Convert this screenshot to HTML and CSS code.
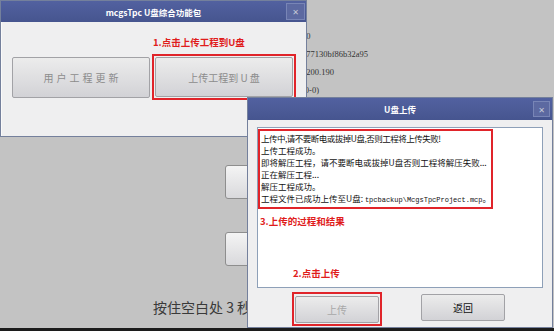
FILE: index.html
```html
<!DOCTYPE html>
<html>
<head>
<meta charset="utf-8">
<link rel="stylesheet" href="styles.css">
</head>
<body>
<div class="screen">
  <div class="desktop">
    <div class="app">
      <div class="info">
        <div class="info-line">10</div>
        <div class="info-line">577130bf86b32a95</div>
        <div class="info-line">1200.190</div>
        <div class="info-line">(0-0)</div>
      </div>
      <div class="app-btn"></div>
      <div class="app-btn app-btn-2"></div>
      <div class="hint">按住空白处 3 秒</div>
    </div>

    <div class="win win-main">
      <div class="titlebar">
        <span></span>
        <span class="title">mcgsTpc U盘综合功能包</span>
        <span class="close">✕</span>
      </div>
      <div class="body body-main">
        <div class="note note-1">1.点击上传工程到U盘</div>
        <div class="btn-row">
          <button class="btn btn-big btn-spaced">用户工程更新</button>
          <div class="redbox redbox-main">
            <button class="btn btn-big btn-inner">上传工程到 U 盘</button>
          </div>
        </div>
      </div>
    </div>

    <div class="win win-upload">
      <div class="titlebar titlebar-2">
        <span></span>
        <span class="title">U盘上传</span>
        <span class="close close-2">✕</span>
      </div>
      <div class="body body-upload">
        <div class="textarea">
          <div class="redbox log">
            <div class="log-line log-tight">上传中,请不要断电或拔掉U盘,否则工程将上传失败!</div>
            <div class="log-line">上传工程成功。</div>
            <div class="log-line">即将解压工程，请不要断电或拔掉U盘否则工程将解压失败...</div>
            <div class="log-line">正在解压工程...</div>
            <div class="log-line">解压工程成功。</div>
            <div class="log-line">工程文件已成功上传至U盘: <span class="mono">tpcbackup\McgsTpcProject.mcp</span>。</div>
          </div>
          <div class="note note-3">3.上传的过程和结果</div>
          <div class="note note-2">2.点击上传</div>
        </div>
        <div class="btn-row btn-row-2">
          <div class="redbox redbox-up">
            <button class="btn btn-small btn-disabled">上传</button>
          </div>
          <button class="btn btn-small btn-back">返回</button>
        </div>
      </div>
    </div>
  </div>
  <div class="bezel"></div>
</div>
</body>
</html>
```

FILE: styles.css
```css
html, body {
  margin: 0;
  padding: 0;
}
body {
  width: 554px;
  height: 331px;
  overflow: hidden;
  background: #c3c3c3;
  font-family: "Noto Sans CJK SC", "DejaVu Sans", sans-serif;
}
.screen {
  width: 554px;
  height: 331px;
  display: flex;
  flex-direction: column;
}
.desktop {
  position: relative;
  flex: 1;
  overflow: hidden;
  background: #c3c3c3;
}
.bezel {
  height: 3px;
  background: #1c1c1c;
}

/* background application */
.app {
  display: flex;
  flex-direction: column;
  align-items: flex-start;
}
.info {
  margin: 27px 0 0 302px;
  font-family: "Liberation Serif", serif;
  font-size: 8.5px;
  color: #333;
}
.info-line {
  height: 18px;
  line-height: 18px;
}
.app-btn {
  margin: 66px 0 0 225px;
  width: 80px;
  height: 34px;
  box-sizing: border-box;
  border: 1px solid #8e8e8e;
  border-radius: 3px;
  background: linear-gradient(#f4f4f4, #d9d9dc);
}
.app-btn-2 {
  margin-top: 33px;
}
.hint {
  margin: 31px 0 0 153px;
  font-family: "Noto Sans CJK SC", serif;
  font-size: 14px;
  line-height: 20px;
  color: #3a3a3a;
  white-space: nowrap;
}

/* windows */
.win {
  position: absolute;
  box-sizing: border-box;
  border: 1px solid #74809c;
  background: #efeff0;
  display: flex;
  flex-direction: column;
}
.win-main {
  left: 0;
  top: 0;
  width: 307px;
  height: 137px;
}
.win-upload {
  left: 247px;
  top: 97px;
  width: 306px;
  height: 231px;
}
.titlebar {
  height: 21px;
  background: linear-gradient(#5261a0, #46558f);
  display: grid;
  grid-template-columns: 1fr auto 1fr;
  align-items: center;
  color: #fff;
  font-weight: bold;
  font-size: 8.5px;
}
.titlebar-2 {
  height: 22px;
}
.title {
  white-space: nowrap;
}
.close {
  justify-self: end;
  margin-right: 1px;
  width: 19px;
  height: 17px;
  box-sizing: border-box;
  border: 1px solid #7885b6;
  background: #5c69a1;
  color: #c4c8d6;
  font-size: 8px;
  font-weight: bold;
  display: flex;
  align-items: center;
  justify-content: center;
}
.close-2 {
  width: 17px;
  height: 16px;
  margin-right: 2px;
}
.body {
  flex: 1;
  display: flex;
  flex-direction: column;
  align-items: flex-start;
}
.body-main {
  border-left: 1px solid #fafafa;
}

/* notes */
.note {
  color: #e01c1c;
  font-weight: bold;
  font-size: 9.5px;
  line-height: 12px;
  white-space: nowrap;
}
.note-1 {
  margin: 14px 0 0 151px;
}
.note-3 {
  margin: 6px 0 0 2px;
}
.note-2 {
  margin: auto 0 8px 35px;
}

/* buttons */
.btn-row {
  display: flex;
  align-items: flex-start;
  margin: 6px 0 0 10px;
}
.btn {
  box-sizing: border-box;
  border: 1px solid #a2a2a6;
  border-radius: 2px;
  background: linear-gradient(#ececec, #d2d2d6);
  font-family: "Noto Sans CJK SC", sans-serif;
  padding: 0;
  color: #8c8c8c;
}
.btn-big {
  width: 138px;
  height: 41px;
  font-size: 10px;
}
.btn-spaced {
  margin-top: 3px;
  letter-spacing: 3px;
  padding-left: 3px;
}
.btn-inner {
  height: 40px;
}
.redbox {
  border: 2px solid #e0242a;
  padding: 1px;
}
.redbox-main {
  margin-left: 2px;
}

/* upload window body */
.body-upload {
  padding: 7px 9px 0 9px;
}
.textarea {
  width: 286px;
  height: 161px;
  box-sizing: border-box;
  border: 1px solid #8ea0b8;
  background: #fff;
  padding: 1px 0 0 0;
  display: flex;
  flex-direction: column;
  align-items: flex-start;
}
.log {
  width: 235px;
  box-sizing: border-box;
  padding: 1px 0 1px 1px;
}
.log-line {
  font-size: 8.5px;
  line-height: 12px;
  color: #111;
  white-space: nowrap;
}
.log-tight {
  letter-spacing: -0.5px;
}
.mono {
  font-family: "Liberation Mono", monospace;
  font-size: 7px;
  letter-spacing: 0;
}
.btn-row-2 {
  margin: 4px 0 0 35px;
}
.btn-small {
  width: 84px;
  height: 27px;
  font-size: 10px;
}
.btn-disabled {
  color: #a8a8a8;
}
.btn-back {
  margin: 2px 0 0 39px;
  color: #111;
}
```
